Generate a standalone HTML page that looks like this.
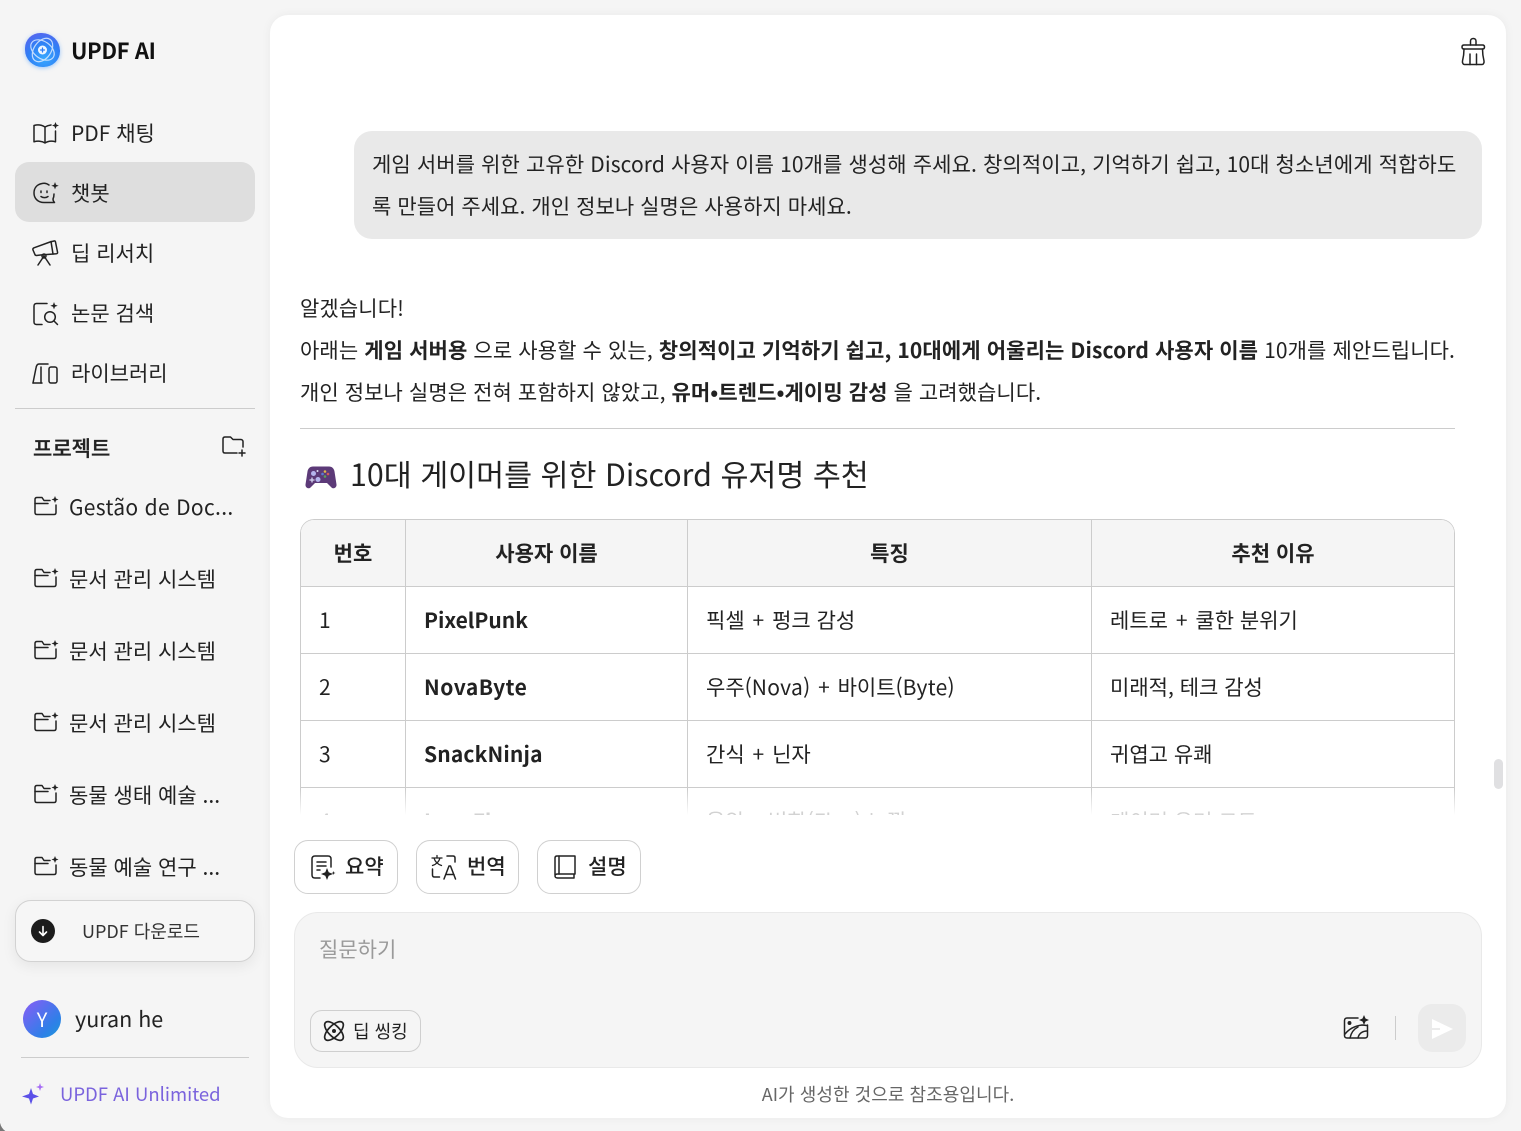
<!DOCTYPE html>
<html lang="ko"><head><meta charset="utf-8"><title>UPDF AI</title>
<style>
html,body{margin:0;padding:0;width:1521px;height:1131px;overflow:hidden;background:#f5f5f5}
body{position:relative;font-family:"Liberation Sans","Noto Sans CJK KR",sans-serif;color:#222}
.t{position:absolute;white-space:nowrap;font-family:"Noto Sans CJK KR",sans-serif;font-size:21px;line-height:30px;color:#222}
.b{font-weight:700}
.p{margin:0 2px}
.la{letter-spacing:.3px}
svg{position:absolute;overflow:visible;fill:none;stroke:#222;stroke-width:1.5;stroke-linecap:round;stroke-linejoin:round}
.box{position:absolute;box-sizing:border-box}
.l{position:absolute;background:#ccc}
</style></head><body>
<div class="box" style="left:0;top:1111px;width:20px;height:20px;background:#777;"></div>
<div class="box" style="left:0;top:1109px;width:24px;height:24px;background:#f5f5f5;border-bottom-left-radius:12px;"></div>
<div class="box" style="left:0;top:0;width:270px;height:1131px;background:#f5f5f5;clip-path:polygon(0 0,100% 0,100% 100%,8px 100%,0 1123px)"></div>

<div class="box" style="left:270px;top:15px;width:1236px;height:1103px;background:#fff;border-radius:18px;box-shadow:0 0 10px rgba(0,0,0,.05)"></div>

<!-- logo -->
<div class="box" style="left:25px;top:33px;width:35px;height:34px;border-radius:44% 52% 46% 50%;background:radial-gradient(circle at 55% 75%,#38a8ff,#2f80f5 50%,#5a62ee 88%);box-shadow:0 1px 4px rgba(80,160,255,.55)"></div>
<svg style="left:25px;top:33px" width="35" height="34" viewBox="0 0 35 34"><g stroke="#dcebff" stroke-width="1.2" opacity=".85"><ellipse cx="17.500" cy="17" rx="13" ry="8.500" transform="rotate(35 17.500 17)"/><ellipse cx="17.500" cy="17" rx="13" ry="8.500" transform="rotate(-55 17.500 17)"/></g><circle cx="17.500" cy="17" r="4.500" fill="#eef6ff" stroke="none"/><path d="M17.500 15v4M15.500 17h4" stroke="#2f7df5" stroke-width="1.300"/></svg>
<div class="t b" style="left:71px;top:35px;font-size:22px;letter-spacing:-.4px;color:#111">UPDF AI</div>

<!-- nav -->
<div class="box" style="left:15px;top:162px;width:240px;height:60px;background:#dedede;border-radius:14px"></div>

<svg style="left:33px;top:122px" width="26" height="22" viewBox="0 0 26 22"><path d="M1 3.500c3.500-1 7.500-.7 11 1.500v16c-3-2-7.500-2.300-11-1.200zM12 5c2-1.200 4-1.800 6-2M12 21c3-2 7-2.300 10.500-1.200V9"/><path d="M22.500 0l1 2.500 2.500 1-2.500 1-1 2.500-1-2.500-2.500-1 2.500-1z" fill="#222" stroke="none"/></svg>
<div class="t" style="left:71px;top:118px">PDF 채팅</div>

<svg style="left:33px;top:182px" width="26" height="22" viewBox="0 0 26 22"><path d="M16 3c-2-1.500-5-2-7-1.500C4 2.500 1 6 1 11c0 5.500 4 9.500 10 9.500h10.500c-1-1-1.500-2-1.500-3.500 .7-1.500 1-3 1-5"/><path d="M8 9v1.500M14 9v1.500M8 14.500c2 1.500 5 1.500 7 0"/><path d="M22 0l1 2.700 2.700 1-2.700 1-1 2.700-1-2.700-2.700-1 2.700-1z" fill="#222" stroke="none"/></svg>
<div class="t" style="left:71px;top:178px">챗봇</div>

<svg style="left:32px;top:239px" width="27" height="27" viewBox="0 0 27 27"><path d="M1 11c-.3-1 0-1.800 1-2.200L18 3l4-1c.8-.2 1.300 0 1.500 1l2 10c.2 1 0 1.500-1 1.700l-3 .3-13 1-4 .5c-1 0-1.500-.5-1.700-1.300z"/><path d="M19 2.500l2 12.500"/><path d="M12 17l-6 9M12 17l6 9"/><circle cx="12" cy="17" r="2"/></svg>
<div class="t" style="left:71px;top:238px">딥 리서치</div>

<svg style="left:33px;top:302px" width="26" height="24" viewBox="0 0 26 24"><path d="M14 1.500H3.500c-1.500 0-2.500 1-2.500 2.500v16c0 1.500 1 2.500 2.500 2.500H9"/><circle cx="17" cy="15" r="5.300"/><path d="M21 19l3.500 3.500"/><path d="M21 0l1 2.700 2.700 1-2.700 1-1 2.700-1-2.700-2.700-1 2.700-1z" fill="#222" stroke="none"/></svg>
<div class="t" style="left:71px;top:298px">논문 검색</div>

<svg style="left:32px;top:362px" width="26" height="22" viewBox="0 0 26 22"><path d="M1 21L4 6C4.500 3 5.500 2 7 2h9"/><path d="M1 21h9"/><path d="M9 5v16"/><rect x="17" y="5" width="8" height="16" rx="2"/></svg>
<div class="t" style="left:71px;top:358px">라이브러리</div>

<div class="l" style="left:15px;top:408px;width:240px;height:1px"></div>

<div class="t" style="left:33px;top:433px;font-weight:500;-webkit-text-stroke:.3px #222">프로젝트</div>
<svg style="left:222px;top:436px" width="25" height="21" viewBox="0 0 25 21"><path d="M21 11V5.500C21 4.500 20 3.500 19 3.500H11L8.500 1H3C1.800 1 1 1.800 1 3v12c0 1.200 .8 2 2 2h12"/><path d="M20 14v6M17 17h6"/></svg>

<svg style="left:34px;top:496px" width="25" height="20" viewBox="0 0 25 20"><path d="M16 4.500H10L8 1.500H3C1.800 1.500 1 2.300 1 3.500v13c0 1.200.8 2 2 2h17c1.200 0 2-.8 2-2V9"/><path d="M1 7.500h13"/><path d="M21 0l1 2.500 2.500 1-2.500 1-1 2.500-1-2.500-2.500-1 2.500-1z" fill="#222" stroke="none"/></svg>
<div class="t" style="left:69px;top:492px;letter-spacing:.33px">Gestão de Doc...</div>
<svg style="left:34px;top:568px" width="25" height="20" viewBox="0 0 25 20"><path d="M16 4.500H10L8 1.500H3C1.800 1.500 1 2.300 1 3.500v13c0 1.200.8 2 2 2h17c1.200 0 2-.8 2-2V9"/><path d="M1 7.500h13"/><path d="M21 0l1 2.500 2.500 1-2.500 1-1 2.500-1-2.500-2.500-1 2.500-1z" fill="#222" stroke="none"/></svg>
<div class="t" style="left:69px;top:564px">문서 관리 시스템</div>
<svg style="left:34px;top:640px" width="25" height="20" viewBox="0 0 25 20"><path d="M16 4.500H10L8 1.500H3C1.800 1.500 1 2.300 1 3.500v13c0 1.200.8 2 2 2h17c1.200 0 2-.8 2-2V9"/><path d="M1 7.500h13"/><path d="M21 0l1 2.500 2.500 1-2.500 1-1 2.500-1-2.500-2.500-1 2.500-1z" fill="#222" stroke="none"/></svg>
<div class="t" style="left:69px;top:636px">문서 관리 시스템</div>
<svg style="left:34px;top:712px" width="25" height="20" viewBox="0 0 25 20"><path d="M16 4.500H10L8 1.500H3C1.800 1.500 1 2.300 1 3.500v13c0 1.200.8 2 2 2h17c1.200 0 2-.8 2-2V9"/><path d="M1 7.500h13"/><path d="M21 0l1 2.500 2.500 1-2.500 1-1 2.500-1-2.500-2.500-1 2.500-1z" fill="#222" stroke="none"/></svg>
<div class="t" style="left:69px;top:708px">문서 관리 시스템</div>
<svg style="left:34px;top:784px" width="25" height="20" viewBox="0 0 25 20"><path d="M16 4.500H10L8 1.500H3C1.800 1.500 1 2.300 1 3.500v13c0 1.200.8 2 2 2h17c1.200 0 2-.8 2-2V9"/><path d="M1 7.500h13"/><path d="M21 0l1 2.500 2.500 1-2.500 1-1 2.500-1-2.500-2.500-1 2.500-1z" fill="#222" stroke="none"/></svg>
<div class="t" style="left:69px;top:780px">동물 생태 예술 ...</div>
<svg style="left:34px;top:856px" width="25" height="20" viewBox="0 0 25 20"><path d="M16 4.500H10L8 1.500H3C1.800 1.500 1 2.300 1 3.500v13c0 1.200.8 2 2 2h17c1.200 0 2-.8 2-2V9"/><path d="M1 7.500h13"/><path d="M21 0l1 2.500 2.500 1-2.500 1-1 2.500-1-2.500-2.500-1 2.500-1z" fill="#222" stroke="none"/></svg>
<div class="t" style="left:69px;top:852px">동물 예술 연구 ...</div>

<!-- download -->
<div class="box" style="left:15px;top:900px;width:240px;height:62px;background:#f6f6f6;border:1px solid #d2d2d2;border-radius:16px;box-shadow:0 4px 14px rgba(0,0,0,.07)"></div>
<div class="box" style="left:31px;top:919px;width:24px;height:24px;border-radius:50%;background:#1c1c1c"></div>
<svg style="left:37px;top:925px;stroke:#fff;stroke-width:1.6" width="12" height="12" viewBox="0 0 12 12"><path d="M6 1.500v9M2.500 7L6 10.500 9.500 7"/></svg>
<div class="t" style="left:82px;top:916px;font-size:18px;color:#333">UPDF 다운로드</div>

<!-- user -->
<div class="box" style="left:23px;top:1000px;width:38px;height:38px;border-radius:50%;background:linear-gradient(135deg,#8a5cf6,#2f7fe8 70%,#1c98d8)"></div>
<div class="t" style="left:23px;top:1004px;width:38px;text-align:center;color:#fff;font-size:20px">Y</div>
<div class="t" style="left:75px;top:1004px;font-size:21.500px">yuran he</div>
<div class="l" style="left:21px;top:1057px;width:228px;height:1px"></div>
<svg style="left:22px;top:1083px;stroke:none" width="24" height="21" viewBox="0 0 24 21"><path d="M9 5l2 6 6 2.500-6 2-2 6-2-6-7-2 7-2.500z" fill="#5b50e8"/><path d="M18 0l1 3 3 1-3 1-1 3-1-3-3-1 3-1z" fill="#a66cf5"/></svg>
<div class="t" style="left:60px;top:1079px;font-size:18.500px;color:#7a63dd">UPDF AI Unlimited</div>

<!-- top right broom -->
<svg style="left:1461px;top:38px" width="25" height="28" viewBox="0 0 25 28"><path d="M9.500 7V3c0-1.500 1.200-2.500 2.800-2.500S15 1.500 15 3v4"/><path d="M3 7h6.500M15 7h6.500c1.200 0 2 .8 2 2s-.8 2-2 2H3c-1.200 0-2-.8-2-2s.8-2 2-2z"/><path d="M3 11c0 4-.5 8-1.500 12-.3 1.500.5 3.500 2 3.500h17.500c1.500 0 2.300-2 2-3.500-1-4-1.500-8-1.500-12"/><path d="M9 16v10.500M15.500 16v10.500"/></svg>

<!-- bubble -->
<div class="box" style="left:354px;top:131px;width:1128px;height:108px;background:#e9e9e9;border-radius:18px"></div>
<div class="t" style="left:372px;top:149px;letter-spacing:.11px">게임 서버를 위한 고유한 Discord 사용자 이름 10개를 생성해 주세요. 창의적이고, 기억하기 쉽고, 10대 청소년에게 적합하도</div>
<div class="t" style="left:372px;top:191px;letter-spacing:.06px">록 만들어 주세요. 개인 정보나 실명은 사용하지 마세요.</div>

<div class="t" style="left:300px;top:293px;letter-spacing:.11px">알겠습니다!</div>
<div class="t" style="left:300px;top:335px;letter-spacing:.11px">아래는 <b>게임 서버용</b> 으로 사용할 수 있는, <b>창의적이고 기억하기 쉽고, 10대에게 어울리는 Discord 사용자 이름</b> 10개를 제안드립니다.</div>
<div class="t" style="left:300px;top:377px;letter-spacing:.08px">개인 정보나 실명은 전혀 포함하지 않았고, <b>유머•트렌드•게이밍 감성</b> 을 고려했습니다.</div>
<div class="l" style="left:300px;top:428px;width:1155px;height:1px"></div>

<!-- heading -->
<svg style="left:305px;top:465px;stroke:none" width="32" height="26" viewBox="0 0 32 26"><path d="M8 1.500h16c3 0 5 2 5.500 5l2 13c.4 3-3 5-5 3l-4.500-4.500H10L5.500 22.500c-2 2-5.400 0-5-3l2-13C3 3.500 5 1.500 8 1.500z" fill="#5c3a78"/><circle cx="8.500" cy="8.500" r="2.500" fill="#b5b5ee"/><circle cx="12.500" cy="6" r="1" fill="#dcdcf5"/><circle cx="13" cy="14.500" r="2.500" fill="#b5b5ee"/><path d="M7 13v4M5 15h4" stroke="#d6d6f2" stroke-width="1.300"/><circle cx="20" cy="6.500" r="1.300" fill="#e2b84a"/><circle cx="23" cy="9" r="1.300" fill="#d25a5a"/><circle cx="20" cy="11.500" r="1.300" fill="#5aa35a"/><circle cx="17.500" cy="9" r="1.300" fill="#5a7fd2"/></svg>
<div class="t" style="left:350px;top:451px;font-size:30.400px;line-height:44px">10대 게이머를 위한 Discord 유저명 추천</div>

<!-- table -->
<div class="box" style="left:300px;top:519px;width:1155px;height:300px;border:1px solid #ccc;border-radius:14px 14px 0 0;overflow:hidden;-webkit-mask-image:linear-gradient(#000 270px,transparent 296px);mask-image:linear-gradient(#000 270px,transparent 296px)">
 <div style="position:absolute;left:0;top:0;width:100%;height:66px;background:#f5f5f5"></div>
 <div class="l" style="left:104px;top:0;width:1px;height:300px"></div>
 <div class="l" style="left:386px;top:0;width:1px;height:300px"></div>
 <div class="l" style="left:790px;top:0;width:1px;height:300px"></div>
 <div class="l" style="left:0;top:66px;width:100%;height:1px"></div>
 <div class="l" style="left:0;top:133px;width:100%;height:1px"></div>
 <div class="l" style="left:0;top:200px;width:100%;height:1px"></div>
 <div class="l" style="left:0;top:267px;width:100%;height:1px"></div>
</div>
<div class="t b" style="left:301px;top:538px;width:104px;text-align:center">번호</div>
<div class="t b" style="left:406px;top:538px;width:281px;text-align:center">사용자 이름</div>
<div class="t b" style="left:688px;top:538px;width:403px;text-align:center">특징</div>
<div class="t b" style="left:1092px;top:538px;width:362px;text-align:center">추천 이유</div>

<div class="t" style="left:319px;top:605px">1</div>
<div class="t b" style="left:424px;top:605px">PixelPunk</div>
<div class="t" style="left:706px;top:605px">픽셀 <span class="p">+</span> 펑크 감성</div>
<div class="t" style="left:1110px;top:605px">레트로 <span class="p">+</span> 쿨한 분위기</div>
<div class="t" style="left:319px;top:672px">2</div>
<div class="t b" style="left:424px;top:672px;letter-spacing:.5px">NovaByte</div>
<div class="t" style="left:706px;top:672px">우주(<span class="la">Nova</span>) <span class="p">+</span> 바이트(<span class="la">Byte</span>)</div>
<div class="t" style="left:1110px;top:672px">미래적, 테크 감성</div>
<div class="t" style="left:319px;top:739px">3</div>
<div class="t b" style="left:424px;top:739px;letter-spacing:.15px">SnackNinja</div>
<div class="t" style="left:706px;top:739px">간식 <span class="p">+</span> 닌자</div>
<div class="t" style="left:1110px;top:739px">귀엽고 유쾌</div>
<div style="position:absolute;left:300px;top:811px;width:1155px;height:4px;overflow:hidden;opacity:.2">
 <div class="t" style="left:19px;top:-5px">4</div>
 <div class="t b" style="left:124px;top:-5px">LavaFlux</div>
 <div class="t" style="left:406px;top:-5px">용암 + 변화(Flux) 느낌</div>
 <div class="t" style="left:810px;top:-5px">게이머 유머 코드</div>
</div>

<!-- scrollbar -->
<div class="box" style="left:1494px;top:759px;width:9px;height:30px;border-radius:5px;background:#e0e0e2"></div>

<!-- chips -->
<div class="box" style="left:294px;top:840px;width:104px;height:54px;border:1px solid #d0d0d0;border-radius:14px"></div>
<svg style="left:310px;top:855px" width="26" height="26" viewBox="0 0 26 26"><path d="M10 23H5c-2 0-3-1-3-3V4c0-2 1-3 3-3h13c2 0 3 1 3 3v8"/><path d="M7 7h9M7 11h9M7 15h3"/><path d="M17 13l1.700 4.300L23 19l-4.300 1.700L17 25l-1.700-4.300L11 19l4.300-1.700z" fill="#222" stroke="none"/><path d="M23.500 16l.5 1.500 1.500.5-1.500.5-.5 1.500-.5-1.500-1.500-.5 1.500-.5z" fill="#222" stroke="none"/></svg>
<div class="t" style="left:345px;top:851px;font-weight:500">요약</div>

<div class="box" style="left:416px;top:840px;width:103px;height:54px;border:1px solid #d0d0d0;border-radius:14px"></div>
<svg style="left:431px;top:854px" width="26" height="26" viewBox="0 0 26 26"><path d="M1 4h10M6 1.500V4M3 4c.8 3 3 6 7.500 7.500M9 4c-.8 3-3 6-7.500 7.500" stroke-width="1.300"/><path d="M16 2h6c1.200 0 2 .8 2 2v4M1.500 15v6c0 1.200.8 2 2 2h5"/><path d="M13 25l5-13h1.500l5 13M15 20.500h8"/></svg>
<div class="t" style="left:467px;top:851px;font-weight:500">번역</div>

<div class="box" style="left:537px;top:840px;width:104px;height:54px;border:1px solid #d0d0d0;border-radius:14px"></div>
<svg style="left:554px;top:855px" width="22" height="24" viewBox="0 0 22 24"><path d="M1 20V3c0-1.200.8-2 2-2h18v18H3.500C2 19 1 19.800 1 21s1 2 2.500 2H20v-4"/><path d="M5 1v18"/></svg>
<div class="t" style="left:588px;top:851px;font-weight:500">설명</div>

<!-- input -->
<div class="box" style="left:294px;top:912px;width:1188px;height:156px;background:#f5f5f5;border:1px solid #e9e9e9;border-radius:24px"></div>
<div class="t" style="left:319px;top:934px;color:#9a9a9a">질문하기</div>
<div class="box" style="left:310px;top:1010px;width:111px;height:42px;border:1px solid #cfcfcf;border-radius:12px"></div>
<svg style="left:323px;top:1021px" width="22" height="20" viewBox="0 0 22 20"><g stroke-width="1.700"><ellipse cx="11" cy="10" rx="12" ry="5.500" transform="rotate(45 11 10)"/><ellipse cx="11" cy="10" rx="12" ry="5.500" transform="rotate(-45 11 10)"/></g><circle cx="11" cy="10" r="2" fill="#222" stroke="none"/></svg>
<div class="t" style="left:353px;top:1016px;font-size:18px">딥 씽킹</div>

<svg style="left:1343px;top:1015px" width="27" height="25" viewBox="0 0 27 25"><path d="M15 3H4C2.500 3 1.500 4 1.500 5.500v15C1.500 22 2.500 23 4 23h18c1.500 0 2.500-1 2.500-2.500V10"/><circle cx="6.500" cy="8" r="1.200" fill="#222"/><path d="M2 19c4-5 9-8 17-9l5 .5"/><path d="M7 23c1-5 4-9 8-11M24 16c-4 0-8 2-9 7"/><path d="M21 0l1.500 3.500L26 5l-3.500 1.500L21 10l-1.500-3.500L16 5l3.500-1.500z" fill="#222" stroke="none"/></svg>
<div class="l" style="left:1395px;top:1016px;width:1px;height:24px"></div>
<div class="box" style="left:1418px;top:1004px;width:48px;height:48px;border-radius:14px;background:#ebebeb"></div>
<svg style="left:1432px;top:1019px;stroke:none" width="21" height="20" viewBox="0 0 21 20"><path d="M0 0l21 10L0 20V11h8V9H0z" fill="#fff"/></svg>

<div class="t" style="left:270px;top:1079px;width:1236px;text-align:center;font-size:18px;letter-spacing:.05px;color:#666">AI가 생성한 것으로 참조용입니다.</div>
</body></html>
